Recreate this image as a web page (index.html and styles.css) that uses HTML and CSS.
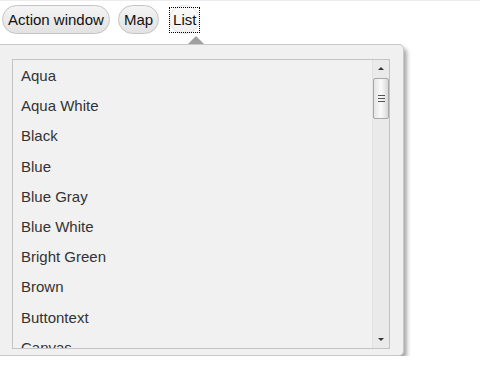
FILE: index.html
```html
<!DOCTYPE html>
<html lang="en">
<head>
    <meta charset="UTF-8">
    <title>List</title>
    <link rel="stylesheet" href="styles.css">
</head>
<body>
    <div class="toolbar">
        <button class="pill">Action window</button>
        <button class="pill">Map</button>
        <button class="pill active">List</button>
    </div>

    <div class="popup">
        <span class="pointer"></span>
        <div class="listbox">
            <ul class="items">
                <li>Aqua</li>
                <li>Aqua White</li>
                <li>Black</li>
                <li>Blue</li>
                <li>Blue Gray</li>
                <li>Blue White</li>
                <li>Bright Green</li>
                <li>Brown</li>
                <li>Buttontext</li>
                <li>Canvas</li>
            </ul>
            <div class="scrollbar">
                <span class="arrow up"></span>
                <div class="track">
                    <div class="thumb">
                        <span></span><span></span><span></span>
                    </div>
                </div>
                <span class="arrow down"></span>
            </div>
        </div>
    </div>
</body>
</html>
```

FILE: styles.css
```css
body {
    font-family: 'Liberation Sans', Arial, sans-serif;
    margin: 0;
    padding: 0;
    background-color: #fff;
    border-top: 1px solid #ececec;
}

.toolbar {
    display: flex;
    gap: 8px;
    padding: 4px 0 0 2px;
    height: 29px;
}

.pill {
    font-family: inherit;
    font-size: 15px;
    color: #111;
    height: 29px;
    padding: 0 5px;
    border: 1px solid #c4c4c4;
    border-radius: 15px;
    background: linear-gradient(#f4f4f4, #e2e2e2);
}

.pill.active {
    position: relative;
    margin-left: 2px;
    padding: 0 3px;
    border-color: #e4e4e4;
    background: linear-gradient(#fafafa, #f0f0f0);
}

.pill.active::after {
    content: "";
    position: absolute;
    top: 1px;
    left: -1px;
    right: -1px;
    bottom: 0;
    border: 1px dotted #000;
}

.popup {
    position: relative;
    margin-top: 10px;
    width: 378px;
    padding: 14px 13px 6px 12px;
    background-color: #f0f0f0;
    border: 1px solid #c8c8c8;
    border-left: none;
    border-radius: 0 5px 5px 0;
    box-shadow: 3px 4px 4px rgba(0, 0, 0, 0.35);
}

.pointer {
    position: absolute;
    top: -9px;
    left: 188px;
    border-left: 8px solid transparent;
    border-right: 8px solid transparent;
    border-bottom: 8px solid #a0a0a0;
}

.listbox {
    display: flex;
    height: 288px;
    border: 1px solid #c4c4c4;
    background-color: #f1f1f1;
    overflow: hidden;
}

.items {
    flex: 1;
    list-style: none;
    margin: 0;
    padding: 1px 0 0 8px;
}

.items li {
    height: 30.2px;
    line-height: 30px;
    font-size: 15px;
    color: #333;
}

.scrollbar {
    width: 16px;
    display: flex;
    flex-direction: column;
    border-left: 1px solid #e2e2e2;
    background-color: #eaeaea;
}

.arrow {
    height: 17px;
    display: flex;
    justify-content: center;
    align-items: center;
}

.arrow::before {
    content: "";
    border-left: 3px solid transparent;
    border-right: 3px solid transparent;
}

.arrow.up::before {
    border-bottom: 3px solid #333;
}

.arrow.down::before {
    border-top: 3px solid #333;
}

.track {
    flex: 1;
}

.thumb {
    margin: 1px 0 0 0;
    height: 39px;
    border: 1px solid #a8a8a8;
    border-radius: 2px;
    background: linear-gradient(to right, #e4e4e4, #fafafa 50%, #d8d8d8);
    display: flex;
    flex-direction: column;
    justify-content: center;
    align-items: center;
    gap: 2px;
}

.thumb span {
    width: 7px;
    height: 1px;
    background-color: #555;
}
```
